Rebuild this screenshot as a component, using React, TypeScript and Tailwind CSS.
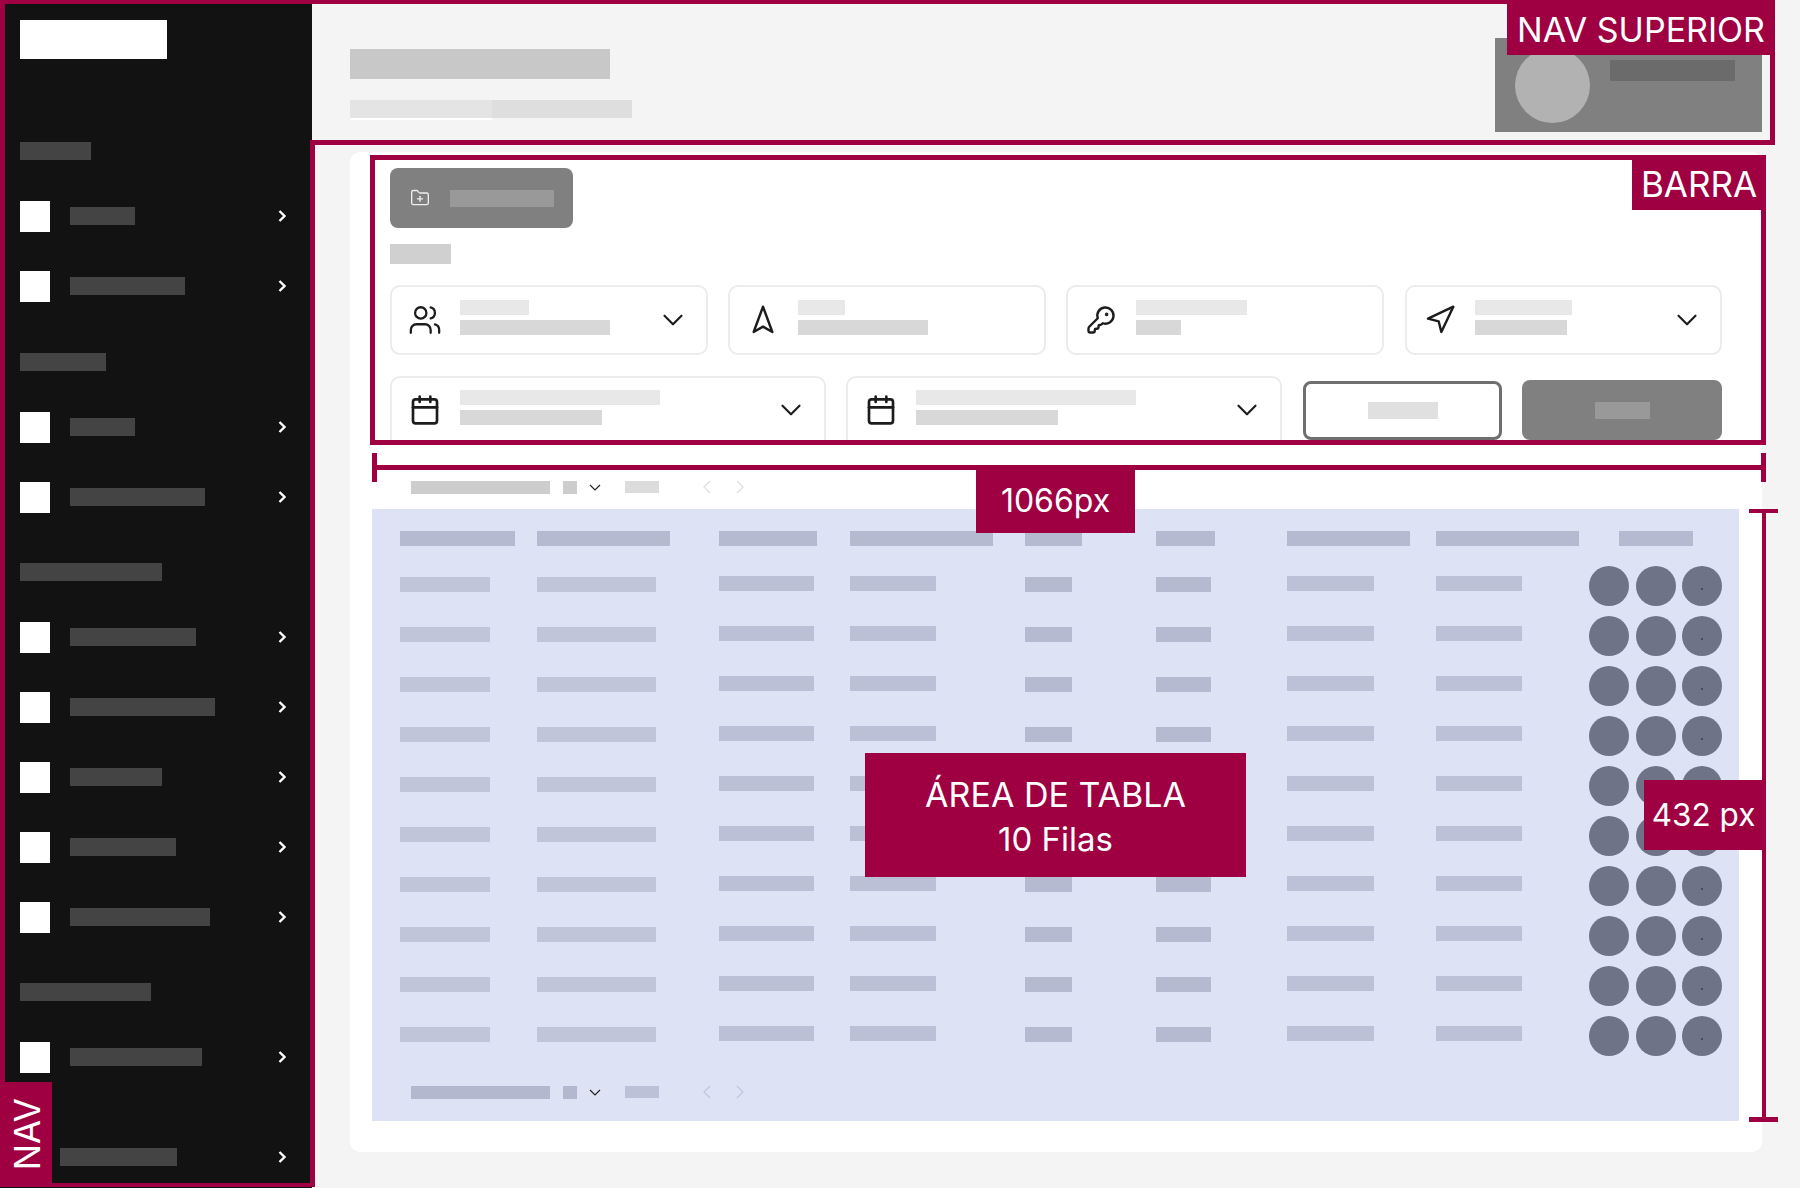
import { Calendar, ChevronDown, FolderPlus, KeyRound, Navigation, Navigation2, Users } from 'lucide-react';
import type { ReactNode } from 'react';

const navBlocks = [
  { type: 'label', cls: 'mt-[83px] w-[71px]' },
  { type: 'item', cls: 'mt-[21px]', bar: 'w-[65px]' },
  { type: 'item', cls: '', bar: 'w-[115px]' },
  { type: 'label', cls: 'mt-[32px] w-[86px]' },
  { type: 'item', cls: 'mt-[21px]', bar: 'w-[65px]' },
  { type: 'item', cls: '', bar: 'w-[135px]' },
  { type: 'label', cls: 'mt-[31px] w-[142px]' },
  { type: 'item', cls: 'mt-[21px]', bar: 'w-[126px]' },
  { type: 'item', cls: '', bar: 'w-[145px]' },
  { type: 'item', cls: '', bar: 'w-[92px]' },
  { type: 'item', cls: '', bar: 'w-[106px]' },
  { type: 'item', cls: '', bar: 'w-[140px]' },
  { type: 'label', cls: 'mt-[31px] w-[131px]' },
  { type: 'item', cls: 'mt-[21px]', bar: 'w-[132px]' },
];

const headerBars = [
  'w-[115px]',
  'w-[133px]',
  'w-[98px]',
  'w-[143px]',
  'w-[57px]',
  'w-[59px]',
  'w-[123px]',
  'w-[143px]',
  'w-[74px] ml-[30px]',
];

const rowBars = [
  'w-[90px] bg-[#c0c5da] mb-[3px]',
  'w-[119px] bg-[#c0c5da] mb-[3px]',
  'w-[95px] bg-[#bbc0d6] mb-[5px]',
  'w-[86px] bg-[#bbc0d6] mb-[5px]',
  'w-[47px] bg-[#b5bad0] mb-[4px]',
  'w-[55px] bg-[#b5bad0] mb-[4px]',
  'w-[87px] bg-[#bcc1d8] mb-[5px]',
  'w-[86px] bg-[#bcc1d8] mb-[5px]',
];

const rows = [...Array(10).keys()];

function Chevron() {
  return (
    <svg width="8" height="12" viewBox="0 0 8 12" fill="none" stroke="#fff" strokeWidth="2.4">
      <path d="M1.5 1L6.5 6L1.5 11" />
    </svg>
  );
}

function Sidebar() {
  return (
    <aside className="w-[312px] h-full shrink-0 bg-[#121212] pt-5 pl-5 pr-[26px]">
      <div className="h-[39px] w-[147px] bg-white"></div>
      {navBlocks.map((b, i) =>
        b.type === 'label' ? (
          <div key={i} className={`h-[18px] bg-[#444444] ${b.cls}`}></div>
        ) : (
          <div key={i} className={`h-[70px] flex items-center ${b.cls}`}>
            <div className="w-[30px] h-[31px] bg-white"></div>
            <div className={`h-[18px] ml-5 bg-[#444444] ${b.bar}`}></div>
            <div className="ml-auto flex">
              <Chevron />
            </div>
          </div>
        ),
      )}
      <div className="h-[70px] mt-[30px] flex items-center">
        <div className="h-[18px] w-[117px] ml-10 bg-[#444444]"></div>
        <div className="ml-auto flex">
          <Chevron />
        </div>
      </div>
    </aside>
  );
}

function Header() {
  return (
    <header className="h-[152px] pl-[38px] pr-[38px] flex justify-between">
      <div className="pt-[49px]">
        <div className="w-[260px] h-[30px] bg-[#c8c8c8]"></div>
        <div className="mt-[21px] flex items-start">
          <div className="w-[142px] h-[18px] box-content border-b-2 border-white bg-[#e4e4e4]"></div>
          <div className="w-[140px] h-[18px] bg-[#dedede]"></div>
        </div>
      </div>
      <div className="mt-[38px] w-[267px] h-[94px] bg-[#808080] flex items-start">
        <div className="ml-5 mt-[10px] w-[75px] h-[75px] rounded-full bg-[#b2b2b2]"></div>
        <div className="ml-5 mt-[22px] w-[125px] h-[21px] bg-[#6b6b6b]"></div>
      </div>
    </header>
  );
}

function FilterCard({
  icon,
  top,
  bottom,
  arrow,
  size,
}: {
  icon: ReactNode;
  top: string;
  bottom: string;
  arrow?: boolean;
  size: string;
}) {
  return (
    <div className={`flex items-start bg-white border-2 border-[#ececec] rounded-[10px] pl-4 pr-4 ${size}`}>
      <div className="w-[34px] h-[34px] mt-[3px] flex items-center justify-center text-[#1c1c1c]">{icon}</div>
      <div className="ml-[18px]">
        <div className={`h-[15px] bg-[#e8e8e8] ${top}`}></div>
        <div className={`h-[15px] mt-[5px] bg-[#d8d8d8] ${bottom}`}></div>
      </div>
      {arrow && (
        <div className="ml-auto w-[34px] h-[34px] mt-[3px] text-[#1c1c1c]">
          <ChevronDown size={34} strokeWidth={1.5} />
        </div>
      )}
    </div>
  );
}

function Barra() {
  return (
    <div className="pl-10 pt-4">
      <div className="w-[183px] h-[60px] bg-[#808080] rounded-lg flex items-center pl-5">
        <FolderPlus size={20} strokeWidth={1.6} className="text-[#eeeeee]" />
        <div className="ml-5 w-[104px] h-[17px] bg-[#999999]"></div>
      </div>
      <div className="mt-4 w-[61px] h-5 bg-[#d0d0d0]"></div>
      <div className="mt-[21px] flex gap-[20.7px]">
        <FilterCard size="w-[317.5px] h-[70px] pt-[13px]" icon={<Users size={34} strokeWidth={1.6} />} top="w-[69px]" bottom="w-[150px]" arrow />
        <FilterCard size="w-[317.5px] h-[70px] pt-[13px]" icon={<Navigation2 size={32} strokeWidth={1.8} />} top="w-[47px]" bottom="w-[130px]" />
        <FilterCard size="w-[317.5px] h-[70px] pt-[13px]" icon={<KeyRound size={30} strokeWidth={1.9} />} top="w-[111px]" bottom="w-[45px]" />
        <FilterCard size="w-[317.5px] h-[70px] pt-[13px]" icon={<Navigation size={32} strokeWidth={1.8} />} top="w-[97px]" bottom="w-[92px]" arrow />
      </div>
      <div className="mt-[21px] h-[69px] overflow-hidden flex">
        <FilterCard size="w-[436px] h-[90px] pt-[12px]" icon={<Calendar size={32} strokeWidth={2} />} top="w-[200px]" bottom="w-[142px]" arrow />
        <div className="ml-5">
          <FilterCard size="w-[436px] h-[90px] pt-[12px]" icon={<Calendar size={32} strokeWidth={2} />} top="w-[220px]" bottom="w-[142px]" arrow />
        </div>
        <div className="ml-[21px] mt-[5px] w-[199px] h-[59px] border-[3px] border-[#6f6f6f] rounded-lg flex items-center justify-center">
          <div className="w-[70px] h-[17px] bg-[#e0e0e0]"></div>
        </div>
        <div className="ml-[20px] mt-1 w-[200px] h-[60px] bg-[#808080] rounded-lg flex items-center justify-center">
          <div className="w-[55px] h-[17px] bg-[#999999]"></div>
        </div>
      </div>
    </div>
  );
}

function ThinChevron({ dir, color }: { dir: 'left' | 'right'; color: string }) {
  return (
    <svg width="8" height="14" viewBox="0 0 8 14" fill="none" stroke={color} strokeWidth="1.2">
      <path d={dir === 'left' ? 'M7 1L1 7L7 13' : 'M1 1L7 7L1 13'} />
    </svg>
  );
}

function Pagination({ bar, small, arrow }: { bar: string; small: string; arrow: string }) {
  return (
    <div className="flex items-center pl-[39px]">
      <div className={`w-[139px] h-[13px] ${bar}`}></div>
      <div className={`ml-[13px] w-[14px] h-[13px] ${bar}`}></div>
      <svg className="ml-3" width="12" height="7" viewBox="0 0 12 7" fill="none" stroke="#222" strokeWidth="1.2">
        <path d="M1 1L6 6L11 1" />
      </svg>
      <div className={`ml-6 w-[34px] h-[12px] -mt-px ${small}`}></div>
      <div className="ml-11 flex gap-[25px]">
        <ThinChevron dir="left" color={arrow} />
        <ThinChevron dir="right" color={arrow} />
      </div>
    </div>
  );
}

function Table() {
  const grid = 'grid grid-cols-[137px_181.5px_131.5px_175px_131px_131px_149px_153px_1fr]';
  return (
    <div className="ml-[22px] w-[1367px] h-[612px] bg-[#dde2f5] pt-[22px]">
      <div className={`${grid} pl-7`}>
        {headerBars.map((w, i) => (
          <div key={i} className={`h-[15px] bg-[#b5bad0] ${w}`}></div>
        ))}
      </div>
      <div className="mt-[15px]">
        {rows.map((r) => (
          <div key={r} className={`${grid} pl-7 h-[50px] items-center`}>
            {rowBars.map((c, i) => (
              <div key={i} className={`h-[15px] ${c}`}></div>
            ))}
            <div className="flex gap-[6.5px]">
              <div className="w-10 h-10 rounded-full bg-[#6e7388]"></div>
              <div className="w-10 h-10 rounded-full bg-[#6e7388]"></div>
              <div className="w-10 h-10 rounded-full bg-[#6e7388] flex items-center justify-center">
                <div className="w-[2px] h-[2px] mt-[6px] bg-[#45495a]"></div>
              </div>
            </div>
          </div>
        ))}
      </div>
      <div className="h-[60px] mt-px flex items-center">
        <Pagination bar="bg-[#b3b8ce]" small="bg-[#bcc1d8]" arrow="#c0c5da" />
      </div>
    </div>
  );
}

function Tag({ cls, children }: { cls: string; children: ReactNode }) {
  return (
    <div className={`absolute bg-[#9e0042] text-white flex items-center justify-center ${cls}`}>{children}</div>
  );
}

function Annotations() {
  return (
    <>
      <div className="absolute left-0 top-0 w-[312px] h-[1187px] border-l-[5px] border-t-[4px] border-b-[4px] border-[#9e0042]"></div>
      <div className="absolute left-[310px] top-[140px] w-[5px] h-[1047px] bg-[#9e0042]"></div>
      <div className="absolute left-[311px] top-0 w-[1464px] h-[145px] border-t-[4px] border-r-[5px] border-b-[5px] border-[#9e0042]"></div>
      <div className="absolute left-[370px] top-[155px] w-[1396px] h-[290px] border-[5px] border-[#9e0042]"></div>

      <div className="absolute left-[372px] top-[465px] w-[1394px] h-[5px] bg-[#9e0042]"></div>
      <div className="absolute left-[372px] top-[453px] w-[5px] h-[29px] bg-[#9e0042]"></div>
      <div className="absolute left-[1761px] top-[453px] w-[5px] h-[29px] bg-[#9e0042]"></div>

      <div className="absolute left-[1762px] top-[509px] w-[4px] h-[612px] bg-[#9e0042]"></div>
      <div className="absolute left-[1749px] top-[509px] w-[29px] h-[4px] bg-[#9e0042]"></div>
      <div className="absolute left-[1749px] top-[1117px] w-[29px] h-[5px] bg-[#9e0042]"></div>

      <Tag cls="left-[1507px] top-0 w-[268px] h-[55px] pt-1 text-[34px]">NAV SUPERIOR</Tag>
      <Tag cls="left-[1632px] top-[155px] w-[134px] h-[55px] pt-[3px] text-[35px]">BARRA</Tag>
      <Tag cls="left-[976px] top-[469px] w-[159px] h-[64px] text-[32px]">1066px</Tag>
      <Tag cls="left-[865px] top-[753px] w-[381px] h-[124px] pt-[3px] flex-col leading-[45px]">
        <span className="text-[34px]">ÁREA DE TABLA</span>
        <span className="text-[33px]">10 Filas</span>
      </Tag>
      <Tag cls="left-[1644px] top-[780px] w-[122px] h-[70px] pr-[3px] text-[31.5px]">432 px</Tag>
      <Tag cls="left-0 top-[1082px] w-[52px] h-[105px] text-[35px]">
        <span className="[writing-mode:vertical-rl] rotate-180 ml-[3px]">NAV</span>
      </Tag>
    </>
  );
}

export default function App() {
  return (
    <div className="relative w-[1800px] h-[1188px] overflow-hidden flex bg-[#f4f4f4] font-['Inter',sans-serif]">
      <Sidebar />
      <main className="flex-1">
        <Header />
        <div className="ml-[38px] w-[1412px] h-[1000px] bg-white rounded-[10px]">
          <Barra />
          <div className="ml-[22px] h-[64px] pt-[35px]">
            <Pagination bar="bg-[#cdcdcd]" small="bg-[#dcdcdc]" arrow="#dddddd" />
          </div>
          <Table />
        </div>
      </main>
      <Annotations />
    </div>
  );
}
